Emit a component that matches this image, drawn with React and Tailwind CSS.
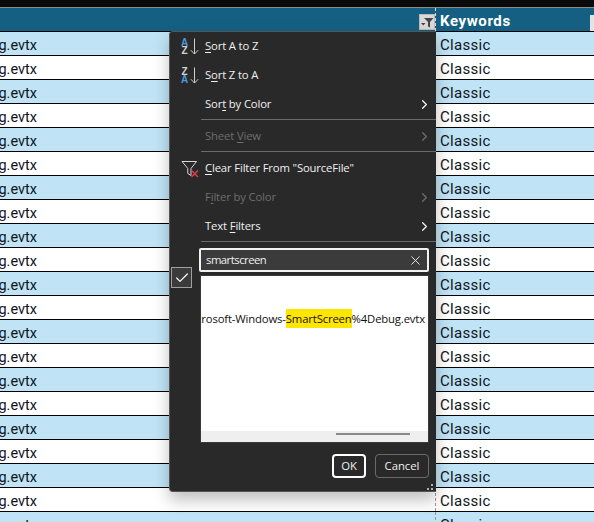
import { ChevronRight, Check, X } from "lucide-react";

const rows = Array.from({ length: 21 }, (_, i) => i);

function SortIcon({ flip }) {
  const blue = "text-[#4a9ade]";
  const gray = "text-[#d0d0d0]";
  return (
    <div className="w-[35px] h-full flex items-center pl-[11px] gap-[2px]">
      <div className="flex flex-col items-center text-[10px] leading-[8px] tracking-normal font-['Liberation_Sans',sans-serif]">
        <span className={`${flip ? gray : blue} font-bold`}>{flip ? "Z" : "A"}</span>
        <span className={`${flip ? blue : gray} font-bold`}>{flip ? "A" : "Z"}</span>
      </div>
      <svg width="9" height="17" viewBox="0 0 9 17" fill="none" stroke="#d0d0d0" strokeWidth="1">
        <path d="M4.5 0.5V16M0.8 12.2L4.5 16L8.2 12.2" />
      </svg>
    </div>
  );
}

function FilterClearIcon() {
  return (
    <div className="w-[35px] h-full flex items-center pl-[11px]">
      <svg width="18" height="18" viewBox="0 0 18 18" fill="none">
        <path d="M1 1.5H15.5L10 8.5V15.5L6.8 13.5V8.5Z" stroke="#d8d8d8" strokeWidth="1" />
        <path d="M10.5 10.5L17 17M17 10.5L10.5 17" stroke="#e0404a" strokeWidth="1.4" />
      </svg>
    </div>
  );
}

function MenuItem({ icon, disabled, arrow, children }) {
  return (
    <div className={`h-[29px] flex items-center ${disabled ? "text-[#6e6e6e]" : "text-[#f0f0f0]"}`}>
      {icon || <div className="w-[35px]" />}
      <span className="flex-1">{children}</span>
      {arrow && (
        <ChevronRight
          size={15}
          strokeWidth={2}
          className={`mr-[4px] ${disabled ? "text-[#6e6e6e]" : "text-[#f4f4f4]"}`}
        />
      )}
    </div>
  );
}

function Sep({ last }) {
  return <div className={`h-px ml-[31px] bg-[#6a6a6a] ${last ? "" : "mb-[2px]"}`} />;
}

function FilterMenu() {
  return (
    <div className="absolute left-[169px] top-[31px] w-[267px] h-[461px] bg-[#292929] border border-[#555] border-r-0 rounded-l-[4px] shadow-[0_8px_16px_rgba(0,0,0,0.25)] text-[11.3px] tracking-[-0.15px] font-['Open_Sans',sans-serif]">
      <MenuItem icon={<SortIcon />}><u className="underline-offset-2">S</u>ort A to Z</MenuItem>
      <MenuItem icon={<SortIcon flip />}>S<u className="underline-offset-2">o</u>rt Z to A</MenuItem>
      <MenuItem arrow>Sor<u className="underline-offset-2">t</u> by Color</MenuItem>
      <Sep />
      <MenuItem disabled arrow>Sheet <u className="underline-offset-2">V</u>iew</MenuItem>
      <Sep />
      <MenuItem icon={<FilterClearIcon />}><u className="underline-offset-2">C</u>lear Filter From "SourceFile"</MenuItem>
      <MenuItem disabled arrow>F<u className="underline-offset-2">i</u>lter by Color</MenuItem>
      <MenuItem arrow>Text <u className="underline-offset-2">F</u>ilters</MenuItem>
      <Sep last />

      <div className="mt-[6px] ml-[29px] mr-[7px] h-[24px] flex items-center justify-between pl-[5px] pr-[4px] bg-[#3b3b3b] border-2 border-[#f2f2f2] rounded-[2px] text-[#f0f0f0]">
        <span className="tracking-[-0.5px]">smartscreen</span>
        <X size={15} strokeWidth={1.5} />
      </div>

      <div className="flex mt-[3px]">
        <div className="w-[30px] shrink-0 pl-[1px]">
          <div className="w-[21px] h-[21px] mt-[-8px] flex items-center justify-center bg-[#3b3b3b] border-[1.5px] border-[#a0a0a0]">
            <Check size={16} strokeWidth={1.8} className="text-white" />
          </div>
        </div>

        <div className="flex-1 min-w-0 mr-[7px] h-[168px] flex flex-col bg-white border border-[#3a3a3a]">
          <div className="flex-1 flex justify-end overflow-hidden pt-[33px] pr-[3px] text-[#111]">
            <span className="whitespace-nowrap leading-[19px] h-[19px]">
              Microsoft-Windows-<span className="inline-block h-[19px] bg-[#ffe600]">SmartScreen</span>%4Debug.evtx
            </span>
          </div>
          <div className="h-[11px] bg-[#efefef] flex justify-end pr-[18px] pt-[2px]">
            <div className="w-[74px] h-[2px] bg-[#8a8a8a]" />
          </div>
        </div>
      </div>

      <div className="mt-[11px] ml-[162px] flex gap-[9px] text-[#f0f0f0] tracking-normal">
        <button className="w-[34px] h-[24px] border-2 border-white rounded-[4px]">OK</button>
        <button className="w-[54px] h-[24px] border border-[#6a6a6a] rounded-[4px]">Cancel</button>
      </div>

      <div className="absolute right-[3px] bottom-[1px] grid grid-cols-2 gap-[2px]">
        <span />
        <span className="w-[2px] h-[2px] bg-[#b0b0b0]" />
        <span className="w-[2px] h-[2px] bg-[#b0b0b0]" />
        <span className="w-[2px] h-[2px] bg-[#b0b0b0]" />
      </div>
    </div>
  );
}

export default function App() {
  return (
    <div className="relative w-[594px] h-[522px] overflow-hidden bg-white font-['Roboto',sans-serif] text-[15px] tracking-[0.3px] text-[#10141c]">
      <div className="h-[7px] bg-[#0a0a0a]" />
      <div className="h-px bg-[#8c8c8c]" />

      {/* header row */}
      <div className="flex h-[24px] bg-[#156082] border-b border-black">
        <div className="w-[436px] flex justify-end items-end pb-px border-r border-dashed border-[#d8d8d8]">
          <div className="w-[16px] h-[16px] flex items-center justify-center bg-[#d9d9d9] border border-[#bbb]">
            <svg width="13" height="11" viewBox="0 0 13 11">
              <path d="M3 1H12.5L9 5V10.5L7 9.5V5Z" fill="#444" />
              <path d="M0 6H4.5L2.2 8.5Z" fill="#444" />
            </svg>
          </div>
        </div>
        <div className="flex-1 flex justify-between items-center pl-[4px] pt-[3px] text-white font-bold tracking-[0.6px]">
          <span>Keywords</span>
          <div className="w-[4px] h-[16px] mt-[3px] bg-[#e4e4e4]" />
        </div>
      </div>

      {rows.map((i) => (
        <div
          key={i}
          className={`flex h-[24px] border-b border-black ${i % 2 === 0 ? "bg-[#c0e4f5]" : "bg-white"}`}
        >
          <div className="w-[436px] border-r border-dashed border-[#9a9a9a]">
            <div className="w-[37px] h-full flex items-center justify-end overflow-hidden pt-[5px] text-[14.5px] tracking-normal">
              <span>Debug.evtx</span>
            </div>
          </div>
          <div className="flex-1 flex items-center pl-[4px] pt-[3px]">Classic</div>
        </div>
      ))}

      <FilterMenu />
    </div>
  );
}
